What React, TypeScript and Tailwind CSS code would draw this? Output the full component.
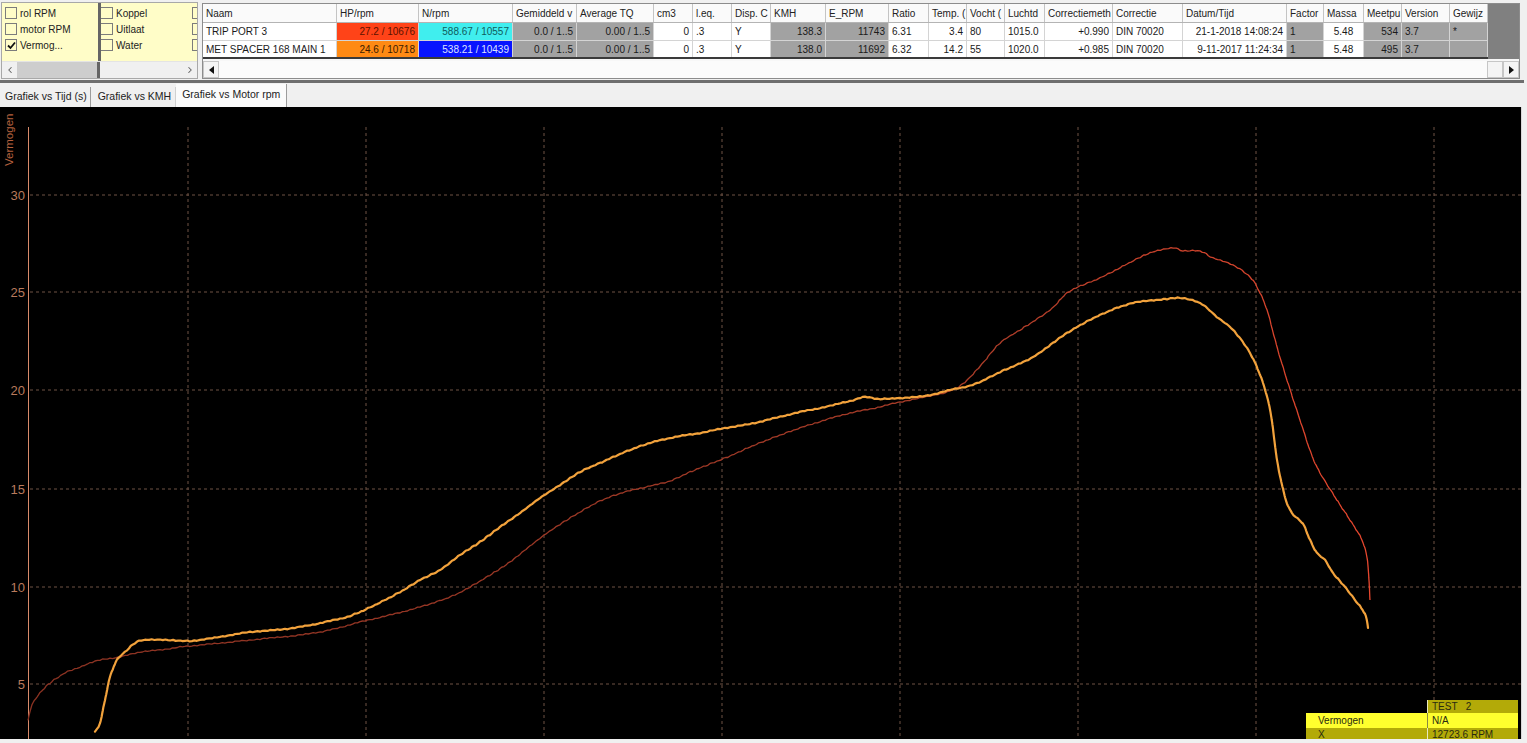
import React from 'react'
import { ChevronLeft, ChevronRight } from 'lucide-react'

interface Cell {
  text: string
  align: 'l' | 'r' | 'c'
  tone?: string
}

// header labels as far as the narrow columns show them
const headers: { label: string; w: string }[] = [
  { label: 'Naam', w: 'w-[134px]' },
  { label: 'HP/rpm', w: 'w-[82px]' },
  { label: 'N/rpm', w: 'w-[94px]' },
  { label: 'Gemiddeld v', w: 'w-[64px]' },
  { label: 'Average TQ', w: 'w-[77px]' },
  { label: 'cm3', w: 'w-[39px]' },
  { label: 'l.eq.', w: 'w-[39px]' },
  { label: 'Disp. C', w: 'w-[39px]' },
  { label: 'KMH', w: 'w-[55px]' },
  { label: 'E_RPM', w: 'w-[63px]' },
  { label: 'Ratio', w: 'w-[40px]' },
  { label: 'Temp. (', w: 'w-[38px]' },
  { label: 'Vocht (', w: 'w-[38px]' },
  { label: 'Luchtd', w: 'w-[40px]' },
  { label: 'Correctiemeth', w: 'w-[68px]' },
  { label: 'Correctie', w: 'w-[70px]' },
  { label: 'Datum/Tijd', w: 'w-[104px]' },
  { label: 'Factor', w: 'w-[37px]' },
  { label: 'Massa', w: 'w-[40px]' },
  { label: 'Meetpu', w: 'w-[38px]' },
  { label: 'Version', w: 'w-[48px]' },
  { label: 'Gewijz', w: 'w-[38px]' },
]

const gray = 'bg-[#a2a2a2]'

const rows: Cell[][] = [
  [
    { text: 'TRIP PORT 3', align: 'l' },
    { text: '27.2 / 10676', align: 'r', tone: 'bg-[#ff4318] text-[#5a1200]' },
    { text: '588.67 / 10557', align: 'r', tone: 'bg-[#40eeee] text-[#105c5c]' },
    { text: '0.0 / 1..5', align: 'r', tone: gray },
    { text: '0.00 / 1..5', align: 'r', tone: gray },
    { text: '0', align: 'r' },
    { text: '.3', align: 'l' },
    { text: 'Y', align: 'l' },
    { text: '138.3', align: 'r', tone: gray },
    { text: '11743', align: 'r', tone: gray },
    { text: '6.31', align: 'l' },
    { text: '3.4', align: 'r' },
    { text: '80', align: 'l' },
    { text: '1015.0', align: 'l' },
    { text: '+0.990', align: 'r' },
    { text: 'DIN 70020', align: 'l' },
    { text: '21-1-2018 14:08:24', align: 'r' },
    { text: '1', align: 'l', tone: gray },
    { text: '5.48', align: 'c' },
    { text: '534', align: 'r', tone: gray },
    { text: '3.7', align: 'l', tone: gray },
    { text: '*', align: 'l', tone: gray },
  ],
  [
    { text: 'MET SPACER 168 MAIN 1', align: 'l' },
    { text: '24.6 / 10718', align: 'r', tone: 'bg-[#ff8a14] text-[#3a1a00]' },
    { text: '538.21 / 10439', align: 'r', tone: 'bg-[#0814ff] text-[#dfe4ff]' },
    { text: '0.0 / 1..5', align: 'r', tone: gray },
    { text: '0.00 / 1..5', align: 'r', tone: gray },
    { text: '0', align: 'r' },
    { text: '.3', align: 'l' },
    { text: 'Y', align: 'l' },
    { text: '138.0', align: 'r', tone: gray },
    { text: '11692', align: 'r', tone: gray },
    { text: '6.32', align: 'l' },
    { text: '14.2', align: 'r' },
    { text: '55', align: 'l' },
    { text: '1020.0', align: 'l' },
    { text: '+0.985', align: 'r' },
    { text: 'DIN 70020', align: 'l' },
    { text: '9-11-2017 11:24:34', align: 'r' },
    { text: '1', align: 'l', tone: gray },
    { text: '5.48', align: 'c' },
    { text: '495', align: 'r', tone: gray },
    { text: '3.7', align: 'l', tone: gray },
    { text: '', align: 'l', tone: gray },
  ],
]

const alignCls = { l: 'justify-start', r: 'justify-end', c: 'justify-center' }

// curve points in page coordinates, taken off the screenshot
const tripPort: number[][] = [
  [28, 720], [32, 705], [40, 693], [50, 683], [65, 673], [80, 667], [100, 660], [120, 657],
  [140, 652], [160, 650], [180, 647], [200, 645], [230, 642], [260, 639], [300, 635], [330, 630],
  [360, 622], [390, 615], [420, 607], [450, 597], [470, 587], [490, 575], [510, 562], [530, 546],
  [550, 531], [575, 515], [600, 501], [625, 492], [650, 486], [670, 481], [690, 472], [710, 464],
  [730, 456], [750, 447], [775, 437], [800, 428], [825, 420], [850, 413], [875, 408], [900, 402],
  [925, 397], [950, 391], [965, 382], [982, 364], [1000, 343], [1020, 330], [1050, 310],
  [1067, 293], [1085, 284], [1100, 278], [1133, 261], [1150, 253], [1173, 248], [1183, 251],
  [1200, 251], [1213, 258], [1233, 265], [1250, 277], [1258, 289], [1267, 310], [1277, 347],
  [1287, 380], [1300, 420], [1315, 463], [1335, 497], [1350, 520], [1362, 540], [1367, 558],
  [1369, 580], [1370, 600],
]

const spacer: number[][] = [
  [95, 732], [100, 723], [105, 700], [110, 677], [117, 660], [125, 652], [135, 643], [145, 640],
  [170, 640], [185, 641], [200, 640], [225, 636], [250, 632], [275, 630], [300, 627], [325, 622],
  [350, 616], [375, 605], [400, 592], [420, 580], [440, 570], [460, 555], [480, 542], [500, 527],
  [520, 513], [540, 498], [560, 485], [580, 472], [600, 463], [625, 452], [650, 443], [675, 437],
  [700, 433], [725, 428], [750, 424], [775, 418], [800, 412], [825, 407], [850, 401], [865, 397],
  [880, 399], [900, 398], [925, 396], [950, 390], [975, 384], [1000, 372], [1033, 357],
  [1067, 333], [1100, 315], [1133, 303], [1167, 299], [1180, 298], [1200, 303], [1217, 317],
  [1233, 330], [1250, 353], [1263, 383], [1271, 415], [1277, 460], [1285, 497], [1292, 513],
  [1303, 524], [1310, 540], [1317, 553], [1325, 560], [1333, 573], [1345, 587], [1355, 600],
  [1365, 614], [1368, 628],
]

function smooth(pts: number[][], wobble: number) {
  const out: string[] = []
  for (let i = 0; i < pts.length - 1; i++) {
    const p0 = pts[Math.max(0, i - 1)]
    const p1 = pts[i]
    const p2 = pts[i + 1]
    const p3 = pts[Math.min(pts.length - 1, i + 2)]
    const steps = Math.max(2, Math.round(Math.hypot(p2[0] - p1[0], p2[1] - p1[1]) / 2.5))
    for (let s = 0; s < steps; s++) {
      const t = s / steps
      const t2 = t * t
      const t3 = t2 * t
      const x = 0.5 * (2 * p1[0] + (-p0[0] + p2[0]) * t + (2 * p0[0] - 5 * p1[0] + 4 * p2[0] - p3[0]) * t2 + (-p0[0] + 3 * p1[0] - 3 * p2[0] + p3[0]) * t3)
      const y = 0.5 * (2 * p1[1] + (-p0[1] + p2[1]) * t + (2 * p0[1] - 5 * p1[1] + 4 * p2[1] - p3[1]) * t2 + (-p0[1] + 3 * p1[1] - 3 * p2[1] + p3[1]) * t3)
      const j = Math.sin(x * 0.9) * wobble + Math.sin(x * 2.3) * wobble * 0.5
      out.push(`${x.toFixed(1)},${(y + j).toFixed(1)}`)
    }
  }
  const last = pts[pts.length - 1]
  out.push(`${last[0]},${last[1]}`)
  return out.join(' ')
}

const yTicks = [
  { v: '30', y: 195 },
  { v: '25', y: 292 },
  { v: '20', y: 390 },
  { v: '15', y: 489 },
  { v: '10', y: 587 },
  { v: '5', y: 684 },
]
const xGrid = [188, 366, 544, 722, 900, 1078, 1256, 1434]

function Box({ checked, cls = '' }: { checked?: boolean; cls?: string }) {
  return (
    <span className={`flex items-center justify-center w-[12px] h-[12px] shrink-0 border border-[#7c7c7c] bg-[#fffdc8] ${cls}`}>
      {checked && (
        <svg width="9" height="9" viewBox="0 0 9 9">
          <path d="M1 4.5 L3.5 7 L8 1.5" fill="none" stroke="#111" strokeWidth="1.8" />
        </svg>
      )}
    </span>
  )
}

function CheckPanel() {
  const col1 = [
    { label: 'rol RPM', checked: false },
    { label: 'motor RPM', checked: false },
    { label: 'Vermog...', checked: true },
  ]
  const col2 = ['Koppel', 'Uitlaat', 'Water']

  return (
    <div className="mt-[2px] ml-[1px] w-[197px] h-[77px] border border-[#a8a8a8] bg-[#fffdc8] flex flex-col overflow-hidden shrink-0">
      <div className="h-[58px] flex">
        <div className="w-[96px] pt-[2px] pl-[3px] flex flex-col">
          {col1.map(c => (
            <div key={c.label} className="h-[16px] flex items-center gap-[3px] text-[#222]">
              <Box checked={c.checked} />
              <span>{c.label}</span>
            </div>
          ))}
        </div>
        <div className="w-[3px] bg-[#656565]" />
        <div className="w-[90px] pt-[2px] flex flex-col">
          {col2.map(c => (
            <div key={c} className="h-[16px] flex items-center gap-[3px] text-[#222]">
              <Box cls="border-l-0 w-[10px]" />
              <span>{c}</span>
            </div>
          ))}
        </div>
        <div className="flex-1 pt-[2px] pl-[1px] flex flex-col overflow-hidden">
          {[0, 1, 2].map(i => (
            <div key={i} className="h-[16px] flex items-center">
              <Box />
            </div>
          ))}
        </div>
      </div>
      <div className="h-[17px] flex border-t border-[#e4e4e4] bg-[#f0f0f0]">
        <div className="w-[15px] flex items-center justify-center text-[#606060]">
          <ChevronLeft size={10} strokeWidth={2.5} />
        </div>
        <div className="w-[80px] bg-[#cdcdcd]" />
        <div className="w-[3px] bg-[#656565]" />
        <div className="flex-1" />
        <div className="w-[15px] flex items-center justify-center text-[#606060]">
          <ChevronRight size={10} strokeWidth={2.5} />
        </div>
      </div>
    </div>
  )
}

function DataTable() {
  return (
    <div className="mt-[3px] ml-[4px] w-[1318px] h-[76px] border border-[#8c8c8c] bg-[#f7f7f7] flex flex-col shrink-0">
      <div className="h-[55px] flex">
        <div className="w-[1285px] flex flex-col">
          <div className="h-[19px] flex border-b border-[#b4b4b4] bg-[#fafafa]">
            {headers.map(h => (
              <div key={h.label} className={`${h.w} shrink-0 h-full px-[3px] flex items-center overflow-hidden whitespace-nowrap border-r border-[#c4c4c4] text-[#222]`}>
                {h.label}
              </div>
            ))}
          </div>
          {rows.map((row, ri) => (
            <div key={ri} className={`h-[18px] flex bg-white ${ri === rows.length - 1 ? 'border-b-2 border-[#3a3a3a]' : 'border-b border-[#d4d4d4]'}`}>
              {row.map((c, ci) => (
                <div
                  key={ci}
                  className={`${headers[ci].w} shrink-0 h-full px-[3px] flex items-center overflow-hidden whitespace-nowrap border-r border-[#d4d4d4] ${alignCls[c.align]} ${c.tone ?? 'text-[#1a1a1a]'}`}
                >
                  {c.text}
                </div>
              ))}
            </div>
          ))}
        </div>
        <div className="flex-1 bg-[#808080]" />
      </div>
      <div className="mt-[2px] h-[17px] flex bg-[#fbfbfb]">
        <div className="w-[16px] border border-[#c6c6c6] bg-[#f4f4f4] flex items-center justify-center">
          <svg width="5" height="8" viewBox="0 0 5 8"><path d="M5 0 L0 4 L5 8 Z" fill="#111" /></svg>
        </div>
        <div className="flex-1" />
        <div className="w-[16px] border border-[#c6c6c6] bg-[#f4f4f4]" />
        <div className="w-[16px] border border-[#c6c6c6] bg-[#f4f4f4] flex items-center justify-center">
          <svg width="5" height="8" viewBox="0 0 5 8"><path d="M0 0 L5 4 L0 8 Z" fill="#111" /></svg>
        </div>
      </div>
    </div>
  )
}

function Tabs() {
  return (
    <div className="h-[24px] w-[1522px] flex items-end pl-[2px] bg-[#f0f0f0] text-[#222] text-[10.5px] shrink-0">
      <div className="h-[20px] pl-[3px] pr-[3px] flex items-center border-r border-[#9c9c9c] whitespace-nowrap">
        Grafiek vs Tijd (s)
      </div>
      <div className="h-[20px] pl-[7px] pr-[4px] flex items-center border-r border-[#d0d0d0] whitespace-nowrap">
        Grafiek vs KMH
      </div>
      <div className="h-[23px] pl-[6px] pr-[6px] pt-[4px] leading-[12px] bg-[#fbfbfb] border-r border-[#9c9c9c] whitespace-nowrap">
        Grafiek vs Motor rpm
      </div>
    </div>
  )
}

function Chart() {
  return (
    <div className="relative w-[1522px] h-[632px] bg-black border-r border-[#d8d8d8] shrink-0">
      <svg width="1521" height="632" viewBox="0 107 1521 632" className="block">
        <defs>
          <linearGradient id="tripGrad" gradientUnits="userSpaceOnUse" x1="0" y1="0" x2="1380" y2="0">
            <stop offset="0" stopColor="#8a3222" />
            <stop offset="0.7" stopColor="#a93c28" />
            <stop offset="1" stopColor="#e8472e" />
          </linearGradient>
        </defs>
        {yTicks.map(t => (
          <g key={t.v}>
            <line x1="30" y1={t.y} x2="1521" y2={t.y} stroke="#6e5244" strokeWidth="1" strokeDasharray="3 3" />
            <text x="25" y={t.y + 5} textAnchor="end" fill="#b97a5c" fontSize="13" fontFamily="Liberation Sans, Arial, sans-serif">
              {t.v}
            </text>
          </g>
        ))}
        {xGrid.map(x => (
          <line key={x} x1={x} y1="127" x2={x} y2="739" stroke="#6e5244" strokeWidth="1" strokeDasharray="3 3" />
        ))}
        <line x1="28.5" y1="127" x2="28.5" y2="739" stroke="#d88a6a" strokeWidth="1" />
        <text
          x="0"
          y="0"
          transform="translate(13 166) rotate(-90)"
          fill="#b4603e"
          fontSize="11.5"
          fontFamily="Liberation Sans, Arial, sans-serif"
        >
          Vermogen
        </text>
        <polyline points={smooth(tripPort, 0.45)} fill="none" stroke="url(#tripGrad)" strokeWidth="1.3" strokeLinejoin="round" />
        <polyline points={smooth(spacer, 0.4)} fill="none" stroke="#f2a23c" strokeWidth="2.2" strokeLinejoin="round" strokeLinecap="round" />
      </svg>

      <div className="absolute left-[1306px] top-[593px] w-[212px] h-[39px] overflow-hidden text-[#2a2a10] flex flex-col">
        <div className="h-[13px] flex">
          <div className="w-[121px]" />
          <div className="flex-1 bg-[#b3aa08] pl-[4px] leading-[13px] whitespace-pre border-l border-[#e8e8c0]">TEST   2</div>
        </div>
        <div className="h-[15px] flex bg-[#ffff2e] leading-[15px]">
          <div className="w-[121px] pl-[12px]">Vermogen</div>
          <div className="flex-1 pl-[4px] border-l border-[#8a8a40]">N/A</div>
        </div>
        <div className="h-[14px] flex bg-[#b3aa08] leading-[14px]">
          <div className="w-[121px] pl-[12px]">X</div>
          <div className="flex-1 pl-[4px] border-l border-[#e8e8c0]">12723.6 RPM</div>
        </div>
      </div>
    </div>
  )
}

export default function App() {
  return (
    <div className="w-[1527px] h-[743px] overflow-hidden bg-[#f0f0f0] font-['Liberation_Sans',Arial,sans-serif] text-[10px] text-[#1a1a1a] flex flex-col">
      <div className="h-[80px] flex items-start shrink-0">
        <CheckPanel />
        <DataTable />
      </div>
      <div className="h-[3px] w-[1524px] bg-[#6e6e6e] shrink-0" />
      <Tabs />
      <Chart />
    </div>
  )
}
